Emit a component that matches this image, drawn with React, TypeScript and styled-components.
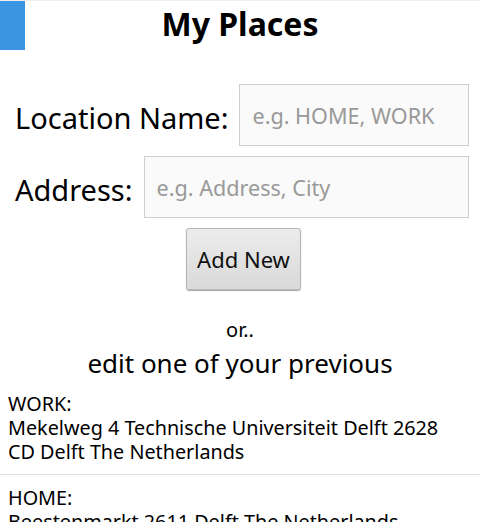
import styled, { createGlobalStyle } from "styled-components";

const places = [
  { name: "WORK", address: "Mekelweg 4 Technische Universiteit Delft 2628 CD Delft The Netherlands" },
  { name: "HOME", address: "Beestenmarkt 2611 Delft The Netherlands" },
];

export default function App() {
  return (
    <Page>
      <GlobalStyle />
      <Header>
        <Tab />
        <Title>My Places</Title>
      </Header>
      <Form>
        <Row>
          <Label>Location Name:</Label>
          <Input placeholder="e.g. HOME, WORK" />
        </Row>
        <Row>
          <Label>Address:</Label>
          <Input placeholder="e.g. Address, City" />
        </Row>
        <Button>Add New</Button>
      </Form>
      <Or>or..</Or>
      <Edit>edit one of your previous</Edit>
      <List>
        {places.map((p) => (
          <Item key={p.name}>
            {p.name}:
            <br />
            {p.address}
          </Item>
        ))}
      </List>
    </Page>
  );
}

const GlobalStyle = createGlobalStyle`
  body {
    margin: 0;
    background: white;
    font-family: "Noto Sans", "Open Sans", sans-serif;
    color: black;
  }
`;

const Page = styled.div`
  width: 480px;
  height: 522px;
  overflow: hidden;
  border-top: 1px solid #eee;
  box-sizing: border-box;
`;

const Header = styled.div`
  display: grid;
  grid-template-columns: 25px 1fr 25px;
  height: 49px;
`;

const Tab = styled.div`
  background: #3b95e0;
  margin-top: -1px;
`;

const Title = styled.h1`
  margin: 0;
  font-size: 32px;
  font-weight: bold;
  text-align: center;
  line-height: 45px;
`;

const Form = styled.div`
  display: flex;
  flex-direction: column;
  align-items: center;
  gap: 10px;
  padding: 34px 11px 0 15px;
`;

const Row = styled.div`
  display: flex;
  align-items: center;
  gap: 11px;
  align-self: stretch;
`;

const Label = styled.label`
  font-size: 29px;
  white-space: nowrap;
  padding-top: 4px;
`;

const Input = styled.input`
  flex: 1;
  min-width: 0;
  height: 62px;
  box-sizing: border-box;
  border: 1px solid #cfcfcf;
  background: #fafafa;
  padding: 0 12px;
  font-family: inherit;
  font-size: 21.6px;
  outline: none;
  &::placeholder {
    color: #999;
  }
`;

const Button = styled.button`
  width: 115px;
  height: 62px;
  margin-left: 3px;
  border: 1px solid #b5b5b5;
  border-radius: 3px;
  background: linear-gradient(#ececec, #d9d9d9);
  box-shadow: 0 1px 1px rgba(0, 0, 0, 0.35);
  font-family: inherit;
  font-size: 22px;
  color: #111;
`;

const Or = styled.div`
  text-align: center;
  font-size: 20px;
  margin-top: 26px;
  line-height: 28px;
`;

const Edit = styled.div`
  text-align: center;
  font-size: 26px;
  line-height: 36px;
  margin-top: 1px;
`;

const List = styled.div`
  margin-top: 1px;
`;

const Item = styled.div`
  padding: 10px 30px 10px 8px;
  font-size: 19.8px;
  line-height: 24px;
  & + & {
    border-top: 1px solid #ddd;
    padding-top: 11px;
  }
`;
